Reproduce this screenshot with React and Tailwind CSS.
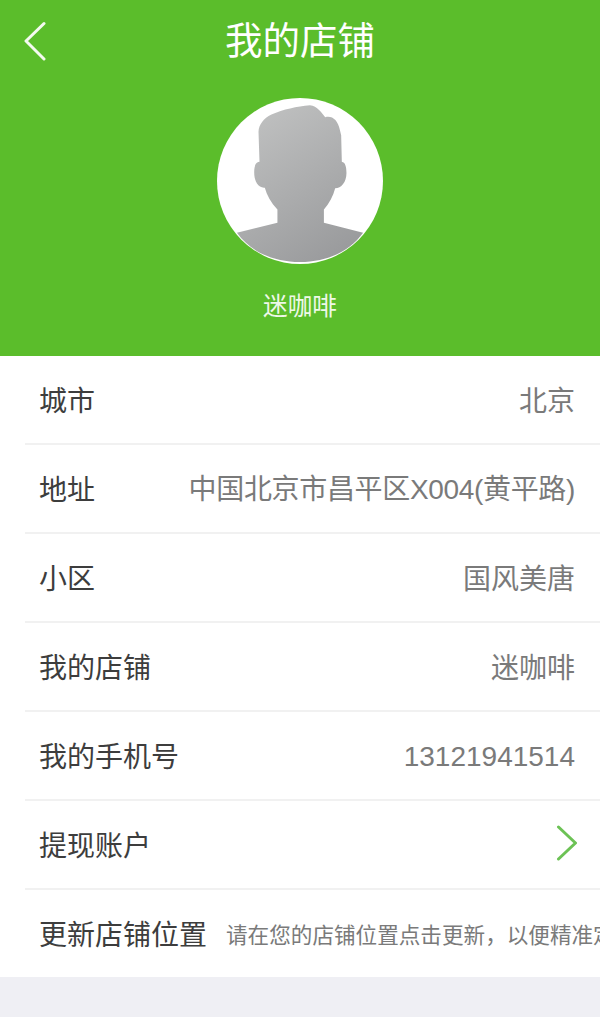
const FONT = "font-['Liberation_Sans','Noto_Sans_CJK_SC',sans-serif]";

const rows = [
  { label: '城市', value: '北京', valueClass: 'pt-[4px]' },
  { label: '地址', value: '中国北京市昌平区X004(黄平路)', valueClass: 'pt-[2px] tracking-[-0.33px]' },
  { label: '小区', value: '国风美唐', valueClass: 'pt-[4px]' },
  { label: '我的店铺', value: '迷咖啡', valueClass: 'pt-[4px]' },
  { label: '我的手机号', value: '13121941514', valueClass: 'pt-[2px]' },
];

function Avatar() {
  return (
    <div className="w-[166px] h-[166px] rounded-full bg-white overflow-hidden">
      <svg viewBox="50 38 500 500" className="w-full h-full">
        <defs>
          <linearGradient id="face" gradientUnits="userSpaceOnUse" x1="170" y1="70" x2="470" y2="520">
            <stop offset="0" stopColor="#c0c1c1" />
            <stop offset="1" stopColor="#97989a" />
          </linearGradient>
        </defs>
        <path
          fill="url(#face)"
          d="M110 444 L232 414 L232 374 C212 352 200 330 194 308 C176 310 162 292 162 262 C162 240 168 230 178 230 L175 140 C176 118 190 100 214 88 C250 72 290 64 330 60 C352 62 366 84 376 96 C396 90 414 104 420 134 L424 150 L426 230 C436 232 440 244 440 264 C440 292 424 310 406 310 C400 334 388 356 372 374 L372 414 L490 444 C448 502 380 532 300 532 C220 532 152 502 110 444 Z"
        />
      </svg>
    </div>
  );
}

export default function App() {
  return (
    <div className={`${FONT} w-[600px] h-[1017px] bg-[#efeff4] overflow-hidden`}>
      {/* header */}
      <div className="h-[356px] bg-[#5bbd2b] flex flex-col items-center relative">
        <svg viewBox="0 0 24 40" className="absolute left-[23px] top-[21px] w-[24px] h-[40px]">
          <path d="M21 2.5 L3 20 L21 38" fill="none" stroke="#f4faf0" strokeWidth="3" strokeLinecap="round" strokeLinejoin="round" />
        </svg>
        <h1 className="mt-[19px] h-[44px] leading-[44px] text-[37.5px] font-normal text-white">我的店铺</h1>
        <div className="mt-[35px]">
          <Avatar />
        </div>
        <p className="mt-[26px] text-[24.6px] leading-[34px] text-[#eef8e8]">迷咖啡</p>
      </div>

      {/* info list */}
      <div className="bg-white pl-[25px]">
        {rows.map((r) => (
          <div key={r.label} className="h-[89px] border-b-2 border-[#f1f1f1] flex items-center justify-between pl-[14px] pr-[25px]">
            <span className="pt-[4px] text-[28px] text-[#3d3d3d]">{r.label}</span>
            <span className={`text-[28px] text-[#7a7a7a] ${r.valueClass}`}>{r.value}</span>
          </div>
        ))}
        <div className="h-[89px] border-b-2 border-[#f1f1f1] flex items-center justify-between pl-[14px] pr-[22px]">
          <span className="pt-[4px] text-[28px] text-[#3d3d3d]">提现账户</span>
          <svg viewBox="0 0 22 36" className="w-[22px] h-[36px] mb-[4px]">
            <path d="M2.5 2 L19.5 18 L2.5 34" fill="none" stroke="#6cc255" strokeWidth="3" strokeLinecap="round" strokeLinejoin="round" />
          </svg>
        </div>
        <div className="h-[87px] flex items-center pl-[14px] overflow-hidden whitespace-nowrap">
          <span className="pt-[4px] text-[28px] text-[#3d3d3d] shrink-0">更新店铺位置</span>
          <span className="pt-[6px] ml-[19px] text-[21.6px] text-[#7a7a7a]">请在您的店铺位置点击更新，以便精准定位</span>
        </div>
      </div>
    </div>
  );
}
